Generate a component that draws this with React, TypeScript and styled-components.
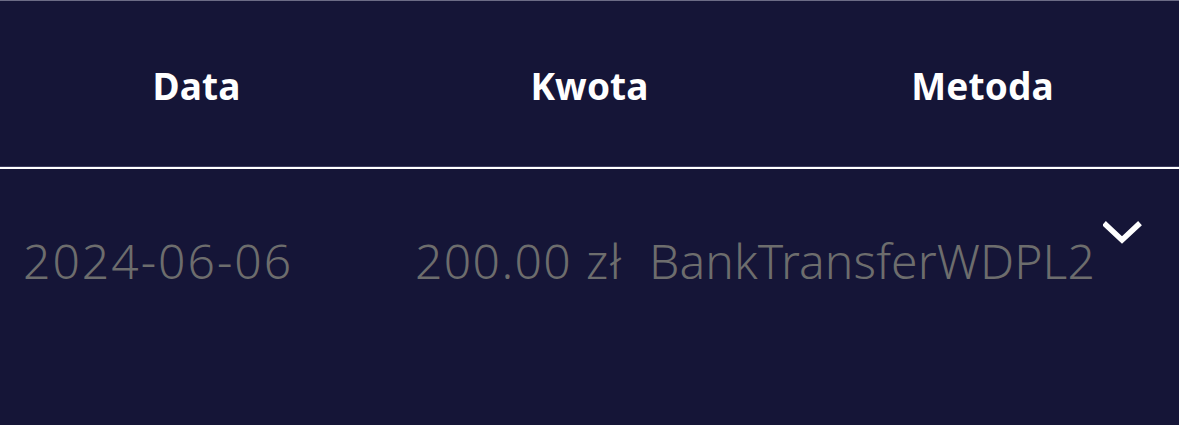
import React from "react";
import styled, { createGlobalStyle } from "styled-components";

const GlobalStyle = createGlobalStyle`
  html, body {
    margin: 0;
    padding: 0;
    background: #151537;
  }
  body {
    font-family: "Noto Sans", "Open Sans", sans-serif;
  }
`;

const Table = styled.div`
  width: 1179px;
  height: 425px;
  background: #151537;
  border-top: 1px solid #6c6c86;
  box-sizing: border-box;
  overflow: hidden;
`;

const HeadRow = styled.div`
  display: grid;
  grid-template-columns: repeat(3, 1fr);
  align-items: center;
  height: 165px;
  border-bottom: 1px solid #3a3a5c;
`;

const HeadCell = styled.div`
  text-align: center;
  color: #ffffff;
  font-weight: 700;
  font-size: 37px;
  letter-spacing: 0.1px;
  padding-top: 4px;
`;

const Divider = styled.div`
  height: 2px;
  background: #ffffff;
`;

const BodyRow = styled.div`
  display: grid;
  grid-template-columns: 392px 234px 454px 1fr;
  align-items: start;
  padding: 52px 0 0 23px;
`;

const Cell = styled.div<{ $spacing: number }>`
  color: #6d6d6d;
  font-weight: 300;
  font-size: 48px;
  letter-spacing: ${(p) => p.$spacing}px;
  line-height: 80px;
  white-space: nowrap;
`;

const Toggle = styled.button`
  background: none;
  border: none;
  padding: 0;
  margin: 0;
  width: 40px;
  height: 30px;
  display: flex;
  cursor: pointer;
`;

type Payment = { date: string; amount: string; method: string };

const payments: Payment[] = [
  { date: "2024-06-06", amount: "200.00 zł", method: "BankTransferWDPL2" },
];

export default function App() {
  return (
    <>
      <GlobalStyle />
      <Table>
        <HeadRow>
          <HeadCell>Data</HeadCell>
          <HeadCell>Kwota</HeadCell>
          <HeadCell>Metoda</HeadCell>
        </HeadRow>
        <Divider />
        {payments.map((p) => (
          <BodyRow key={p.date + p.method}>
            <Cell $spacing={2}>{p.date}</Cell>
            <Cell $spacing={1.4}>{p.amount}</Cell>
            <Cell $spacing={0.1}>{p.method}</Cell>
            <Toggle aria-label="expand">
              <svg width="40" height="30" viewBox="0 0 40 30">
                <path d="M3 4 L19 19 L35 4" fill="none" stroke="#ffffff" strokeWidth="5.5" strokeLinecap="square" />
              </svg>
            </Toggle>
          </BodyRow>
        ))}
      </Table>
    </>
  );
}
